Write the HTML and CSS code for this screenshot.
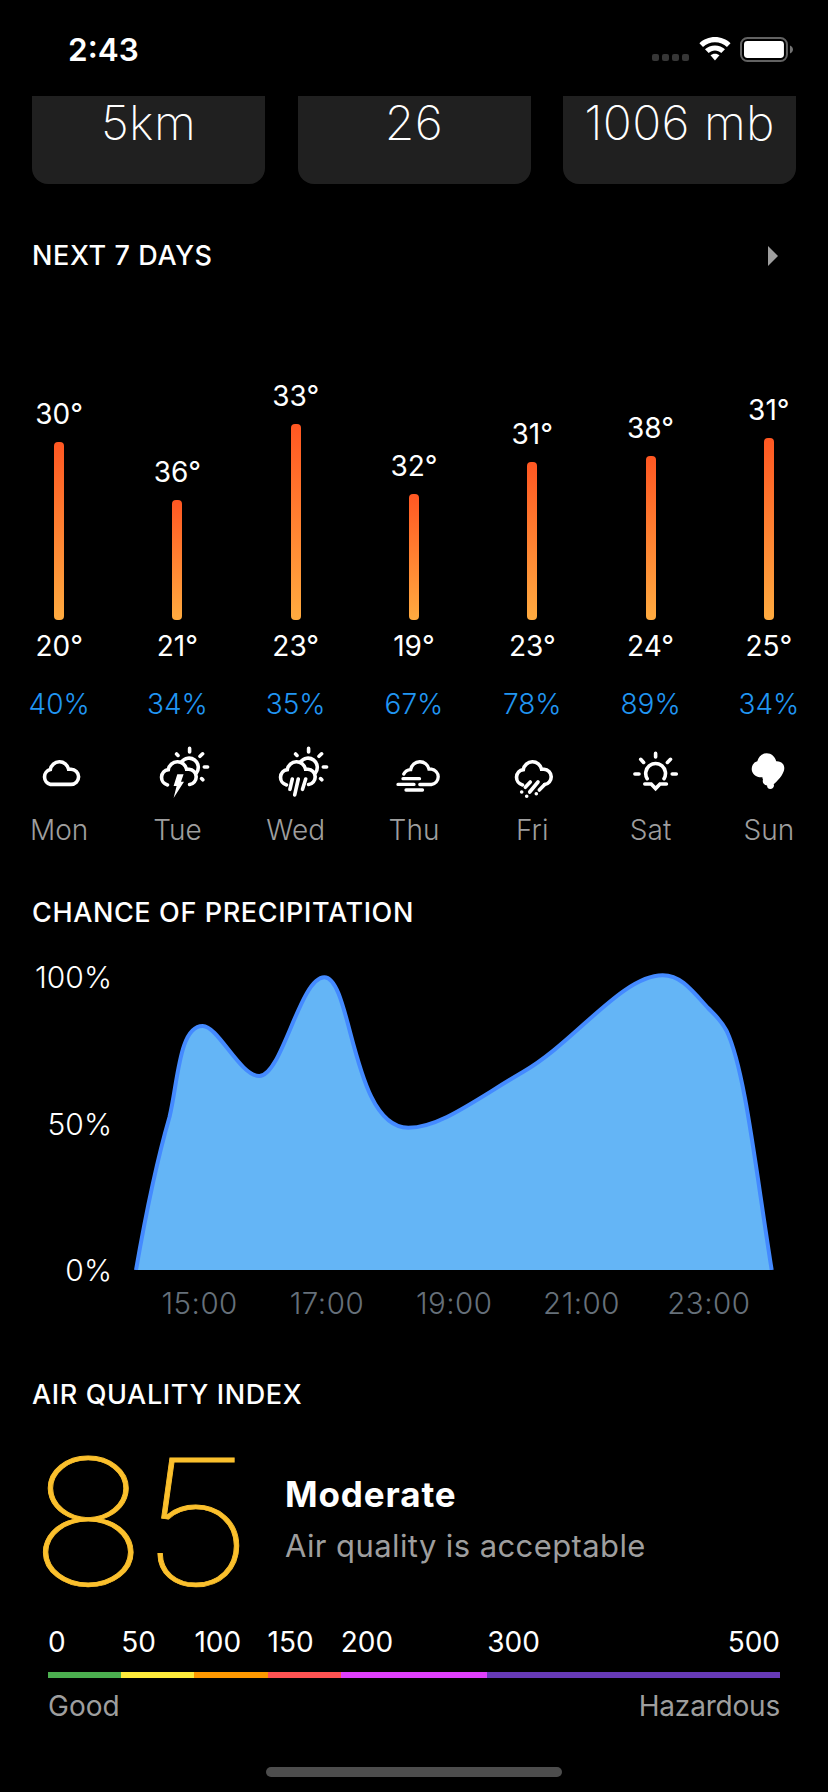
FILE: index.html
```html
<!DOCTYPE html>
<html lang="en">
<head>
<meta charset="utf-8">
<title>Weather</title>
<link rel="stylesheet" href="styles.css">
</head>
<body>
<svg class="defs" width="0" height="0" aria-hidden="true">
  <defs>
    <path id="cloud-open" d="M20.500 44.900A7.800 7.800 0 0 1 21.300 29.600A9.300 9.300 0 0 1 39.600 29.200H42A7.700 7.700 0 0 1 42.600 44.500"/>
    <path id="sun-behind" d="M34.600 21.800A9.100 9.100 0 1 1 49.400 33M42.600 8.400V12M53 16.300L55.600 13.800M29.600 14L31 15.400M57.300 27H60.600M54.600 38.600L55.800 39.800"/>
  </defs>
</svg>
<div class="screen">
  <header class="status">
    <span class="time">2:43</span>
    <span class="signal"><i></i><i></i><i></i><i></i></span>
    <svg class="wifi" viewBox="0 0 32 24">
      <path d="M16 0C22 0 27.500 2.300 31.600 6.200L28 9.900C24.800 6.900 20.600 5.200 16 5.200S7.200 6.900 4 9.900L.4 6.200C4.500 2.300 10 0 16 0Z"/>
      <path d="M16 8.400C19.900 8.400 23.400 9.900 26 12.300L22.300 16C20.600 14.500 18.400 13.600 16 13.600S11.400 14.500 9.700 16L6 12.300C8.600 9.900 12.100 8.400 16 8.400Z"/>
      <path d="M16 16.700C17.800 16.700 19.300 17.300 20.500 18.300L16 23.400L11.500 18.300C12.700 17.300 14.200 16.700 16 16.700Z"/>
    </svg>
    <svg class="battery" viewBox="0 0 54 25">
      <rect x="1" y="1" width="46" height="23" rx="6.500" fill="none" stroke="#626262" stroke-width="2"/>
      <rect x="4" y="4" width="40" height="17" rx="3.500" fill="#fff"/>
      <path d="M50 8.500C52.200 9.400 53 10.800 53 12.500S52.200 15.600 50 16.500Z" fill="#737373"/>
    </svg>
  </header>

  <section class="cards">
    <div class="card">5km</div>
    <div class="card">26</div>
    <div class="card">1006 mb</div>
  </section>

  <div class="heading next-days"><h2>NEXT 7 DAYS</h2>
    <svg class="arrow" viewBox="0 0 10 20"><path d="M0 0L10 10L0 20Z"/></svg>
  </div>

  <section class="week">
    <div class="day"><div class="range"><span>30°</span><b style="height:178px"></b></div><span class="low">20°</span><span class="chance">40%</span>
      <svg class="icon" viewBox="0 0 60 60"><path d="M21.500 44.400A7.600 7.600 0 0 1 21.300 29.600A9.300 9.300 0 0 1 39.600 29.200H42A7.600 7.600 0 0 1 42 44.400Z"/></svg><span class="name">Mon</span></div>
    <div class="day"><div class="range"><span>36°</span><b style="height:120px"></b></div><span class="low">21°</span><span class="chance">34%</span>
      <svg class="icon" viewBox="0 0 60 60"><use href="#cloud-open"/><use href="#sun-behind"/><path class="solid" d="M30.300 34.300H36.600L34 41.700H37L26.600 58L29.600 46H26.600Z"/></svg><span class="name">Tue</span></div>
    <div class="day"><div class="range"><span>33°</span><b style="height:196px"></b></div><span class="low">23°</span><span class="chance">35%</span>
      <svg class="icon" viewBox="0 0 60 60"><use href="#cloud-open"/><use href="#sun-behind"/><path d="M26.300 39L23.900 49.300M32.300 39L28.700 54.900M39.700 39L36.500 49.300"/></svg><span class="name">Wed</span></div>
    <div class="day"><div class="range"><span>32°</span><b style="height:126px"></b></div><span class="low">19°</span><span class="chance">67%</span>
      <svg class="icon" viewBox="0 0 60 60"><path class="fine" d="M19.800 34C21 31.500 23.500 29.800 26.700 29.600A9.300 9.300 0 0 1 45 29.200H47.400A7.700 7.700 0 0 1 47.400 44.500H35.800M19 38.700H35.500M14 44.400H30M22 50H38.500"/></svg><span class="name">Thu</span></div>
    <div class="day"><div class="range"><span>31°</span><b style="height:158px"></b></div><span class="low">23°</span><span class="chance">78%</span>
      <svg class="icon" viewBox="0 0 60 60"><use href="#cloud-open"/><path d="M28.300 42L23.300 47.300M36 42L27.700 52M42.700 44.600L37.300 50M19.700 52V52.010M24.700 56.300V56.310M34.300 53.700V53.710"/></svg><span class="name">Fri</span></div>
    <div class="day"><div class="range"><span>38°</span><b style="height:164px"></b></div><span class="low">24°</span><span class="chance">89%</span>
      <svg class="icon" viewBox="0 0 60 60"><path d="M26.200 38.700A9.900 9.900 0 1 1 43 38.700M34.600 13.400V17M19.700 19.300L22.600 22.400M49.500 19.300L46.400 22.400M13.900 34H18M51.200 34H55.300M23.800 44H30.200L34.600 48.600L39 44H45.400"/></svg><span class="name">Sat</span></div>
    <div class="day"><div class="range"><span>31°</span><b style="height:182px"></b></div><span class="low">25°</span><span class="chance">34%</span>
      <svg class="icon" viewBox="0 0 60 60"><path class="solid" d="M18.300 21.300C19.500 16.500 23 13.300 27.700 13.300S36 16.600 37.200 21.300C41.500 21 45.300 23.700 45.300 28C45.300 33 41 38.600 34.700 44.300C35.800 46.500 33.800 49 31.300 49C29 49 28 47.300 28.100 45.500C25 45.200 23 42.400 24 39.500C23.500 38.900 23.300 38 23.500 37.300C17.500 37.800 12.700 34 12.700 29C12.700 25 15 22.200 18.300 21.300Z"/></svg><span class="name">Sun</span></div>
  </section>

  <h2 class="heading rain">CHANCE OF PRECIPITATION</h2>
  <section class="chart">
    <div class="y-axis"><span>100%</span><span>50%</span><span>0%</span></div>
    <svg class="plot" viewBox="130 962 650 308">
      <path d="M136 1270C147 1207 157 1160 169.500 1117C178 1082 179 1026 202.700 1026C218 1026 240 1076 259.300 1076C282 1076 300 977.300 324.300 977.300C352 977.300 352 1127.700 408.300 1127.700C440 1127.700 475 1100 523.300 1071.700C575 1042 622 975.300 662.700 975.300C680 975.300 690 988 708 1008C716 1016 721 1020 726.700 1031C745 1070 755 1165 771.700 1270" fill="#64b5f6" stroke="#448aff" stroke-width="4"/>
    </svg>
  </section>
  <div class="x-axis"><span>15:00</span><span>17:00</span><span>19:00</span><span>21:00</span><span>23:00</span></div>

  <h2 class="heading air">AIR QUALITY INDEX</h2>
  <section class="aqi">
    <div class="index">85</div>
    <div class="verdict"><strong>Moderate</strong><span>Air quality is acceptable</span></div>
  </section>
  <section class="scale">
    <div class="ticks"><span>0</span><span>50</span><span>100</span><span>150</span><span>200</span><span class="last"><em>300</em><em>500</em></span></div>
    <div class="band"><i class="good"></i><i class="moderate"></i><i class="sensitive"></i><i class="unhealthy"></i><i class="very"></i><i class="hazardous"></i></div>
    <div class="legend"><span>Good</span><span class="worst">Hazardous</span></div>
  </section>
  <div class="home"></div>
</div>
</body>
</html>
```
FILE: styles.css
```css
* { box-sizing: border-box; }
body { margin: 0; background: #000; }
.defs { display: block; height: 0; }
.screen {
  width: 828px;
  height: 1792px;
  overflow: hidden;
  background: #000;
  color: #fff;
  font-family: Inter, "Liberation Sans", sans-serif;
  font-size: 28px;
  line-height: 30px;
}
h2 { margin: 0; font-size: 27px; font-weight: 500; letter-spacing: 0.62px; }
i, em { font-style: normal; }

.status { display: flex; height: 96px; padding: 0 34px 0 68px; }
.time { width: 585px; font-size: 31.5px; font-weight: 600; line-height: 100px; }
.signal { display: flex; gap: 3px; width: 47px; padding-top: 54px; }
.signal i { width: 7px; height: 7px; border-radius: 2px; background: #363636; }
.wifi { width: 32px; height: 24px; margin-top: 37px; fill: #fff; }
.battery { width: 54px; height: 25px; margin: 37px 0 0 9px; }

.cards { display: grid; grid-template-columns: repeat(3, 233px); justify-content: space-between; padding: 0 32px; }
.card {
  height: 88px;
  border-radius: 0 0 16px 16px;
  background: #202020;
  font-size: 48px;
  font-weight: 150;
  letter-spacing: 0.4px;
  line-height: 54px;
  text-align: center;
}

.heading { padding: 0 32px; height: 40px; line-height: 40px; }
.next-days { display: flex; align-items: center; justify-content: space-between; margin-top: 52px; padding-right: 50px; }
.arrow { width: 10px; height: 20px; fill: #9e9e9e; }

.week { display: grid; grid-template-columns: repeat(7, 1fr); height: 569px; }
.day { display: flex; flex-direction: column; align-items: center; }
.range { display: flex; flex-direction: column; align-items: center; justify-content: flex-end; gap: 13px; height: 344px; }
.range b { width: 10px; border-radius: 4px; background: linear-gradient(#ff5722, #ffab40); }
.low { margin-top: 11px; }
.chance { margin-top: 28px; color: #2196f3; font-weight: 300; }
.icon {
  width: 60px;
  height: 60px;
  margin-top: 21px;
  overflow: visible;
  fill: none;
  stroke: #fff;
  stroke-width: 3.6;
  stroke-linecap: round;
}
.fine { stroke-width: 3.3; }
.solid { fill: #fff; stroke: none; }
.name { margin-top: 15px; color: #9e9e9e; font-weight: 300; }

.rain { margin-top: 48px; }
.chart { display: flex; margin-top: 29px; height: 323px; }
.y-axis { display: flex; flex-direction: column; justify-content: space-between; align-items: flex-end; width: 112px; font-size: 30px; font-weight: 300; }
.plot { width: 650px; height: 308px; margin-left: 18px; }
.x-axis {
  display: grid;
  grid-template-columns: repeat(5, 1fr);
  width: 636.5px;
  margin-left: 136px;
  color: #66707a;
  font-weight: 300;
  font-size: 29.5px;
  letter-spacing: 0.5px;
  line-height: 37px;
  text-align: center;
}

.air { margin-top: 53px; }
.aqi { display: flex; align-items: center; height: 200px; margin-top: 6px; padding-left: 28.5px; }
.index {
  width: 256.5px;
  height: 200px;
  color: #fbc02d;
  font-size: 175px;
  font-weight: 100;
  letter-spacing: -5.5px;
  line-height: 200px;
  -webkit-text-stroke: 0.8px #fbc02d;
  transform: scaleX(1.135);
  transform-origin: left;
}
.verdict { display: flex; flex-direction: column; margin-top: -2px; line-height: 52px; }
.verdict strong { font-size: 35px; font-weight: 700; letter-spacing: 0.9px; }
.verdict span { color: #9e9e9e; font-size: 31px; letter-spacing: 0.4px; }

.scale { margin-top: 6px; padding: 0 48px; }
.ticks { display: grid; grid-template-columns: 1fr 1fr 1fr 1fr 2fr 4fr; }
.ticks > span { min-width: 0; }
.last { display: flex; justify-content: space-between; }
.band { display: grid; grid-template-columns: 1fr 1fr 1fr 1fr 2fr 4fr; height: 6px; margin-top: 15px; }
.good { background: #4caf50; }
.moderate { background: #ffeb3b; }
.sensitive { background: #ff9800; }
.unhealthy { background: #ff5252; }
.very { background: #e040fb; }
.hazardous { background: #673ab7; }
.legend { display: flex; justify-content: space-between; margin-top: 13px; color: #9e9e9e; }
.worst { letter-spacing: -0.2px; }
.home { width: 296px; height: 10px; margin: 46px auto 0; border-radius: 5px; background: #4d4d4d; }
```
